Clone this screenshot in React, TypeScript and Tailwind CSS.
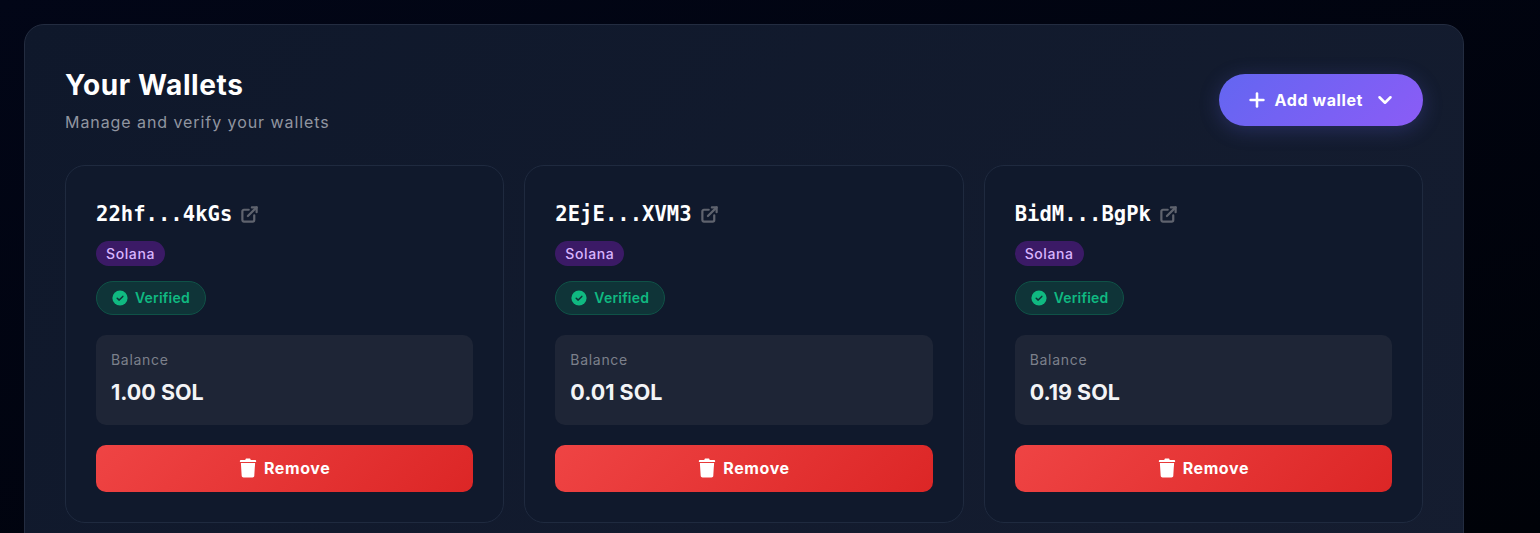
import { Plus, ChevronDown, ExternalLink } from "lucide-react";

const wallets = [
  { addr: "22hf...4kGs", bal: "1.00 SOL" },
  { addr: "2EjE...XVM3", bal: "0.01 SOL" },
  { addr: "BidM...BgPk", bal: "0.19 SOL" },
];

function TrashIcon() {
  return (
    <svg width="18" height="20" viewBox="0 0 18 20" fill="white">
      <path d="M6.2 2 L6.8 .7 C6.9 .5 7.1 .4 7.4 .4 h3.2 c.3 0 .5.1.6.3 l.6 1.3 h4.4 c.5 0 .9.3.9.8 v1.1 H.9 v-1.1 c0-.5.4-.8.9-.8 z" />
      <path d="M1.9 5 h14.2 l-.8 12.7 c-.1 1-.8 1.7-1.8 1.7 H4.5 c-1 0-1.7-.7-1.8-1.7 z" />
    </svg>
  );
}

function Card({ addr, bal }: { addr: string; bal: string }) {
  return (
    <div className="rounded-[20px] border border-[#1f2a3f] bg-[#10192c] p-[30px]">
      <div className="flex h-[36px] items-center gap-[8px]">
        <span className="font-['DejaVu_Sans_Mono',monospace] text-[20.5px] leading-[36px] font-bold tracking-[0.05px] text-white">{addr}</span>
        <ExternalLink size={19} strokeWidth={2.8} className="text-[#5f636e]" />
      </div>
      <div className="mt-[9px] flex">
        <span className="inline-flex h-[25px] items-center rounded-full bg-[#3b1a66] px-[10px] pb-[1px] text-[14px] font-medium tracking-[0.6px] text-[#d8b4fe]">Solana</span>
      </div>
      <div className="mt-[15px] flex">
        <span className="inline-flex h-[34px] items-center gap-[7px] rounded-full border border-[#0f5247] bg-[#0f3438] pr-[15px] pl-[15px] pb-[1px] text-[14px] font-semibold tracking-[0.2px] text-[#10b981]">
          <svg width="16" height="16" viewBox="0 0 16 16">
            <circle cx="8" cy="8" r="7.6" fill="#10b981" />
            <path d="M5.2 8.2l2 1.9 3.6-3.7" fill="none" stroke="#0f3438" strokeWidth="1.5" strokeLinecap="round" strokeLinejoin="round" />
          </svg>
          Verified
        </span>
      </div>
      <div className="mt-[20px] h-[90px] rounded-[10px] bg-[#1e2536] px-[15px] pt-[15px]">
        <div className="text-[14px] leading-[20px] tracking-[0.7px] text-[#7c808b]">Balance</div>
        <div className="mt-[9px] text-[21.5px] leading-[26px] font-bold text-[#f3f4f6]">{bal}</div>
      </div>
      <button className="mt-[20px] flex h-[47px] w-full items-center justify-center gap-[7px] rounded-[10px] bg-[linear-gradient(135deg,#ef4444,#dc2626)] pb-[1px] text-[16px] font-bold tracking-[0.6px] text-white">
        <TrashIcon />
        Remove
      </button>
    </div>
  );
}

export default function App() {
  return (
    <div className="h-[533px] overflow-hidden bg-gradient-to-br from-[#020617] to-[#000208] p-[24px] font-['Inter',sans-serif]">
      <div className="h-[600px] w-[1440px] rounded-[20px] border border-[#232c40] bg-[linear-gradient(135deg,#0f182b,#151d30)] px-[40px] pt-[40px]">
        <div className="flex items-start justify-between">
          <div>
            <h1 className="text-[28px] leading-[40px] font-bold tracking-[0.6px] text-white">Your Wallets</h1>
            <p className="mt-[5px] text-[16px] leading-[24px] tracking-[0.93px] text-[#9095a0]">Manage and verify your wallets</p>
          </div>
          <button className="mt-[9px] flex h-[52px] items-center gap-[7px] rounded-full bg-[linear-gradient(135deg,#6366f1,#8b5cf6)] pr-[27px] pl-[27px] text-[16px] font-bold tracking-[0.6px] text-white shadow-[0_4px_20px_rgba(99,102,241,0.25)]">
            <Plus size={22} strokeWidth={2.8} />
            <span>Add wallet</span>
            <ChevronDown size={22} strokeWidth={2.8} className="ml-[4px]" />
          </button>
        </div>
        <div className="mt-[31px] grid grid-cols-3 gap-[20px]">
          {wallets.map((w) => (
            <Card key={w.addr} {...w} />
          ))}
        </div>
      </div>
    </div>
  );
}
